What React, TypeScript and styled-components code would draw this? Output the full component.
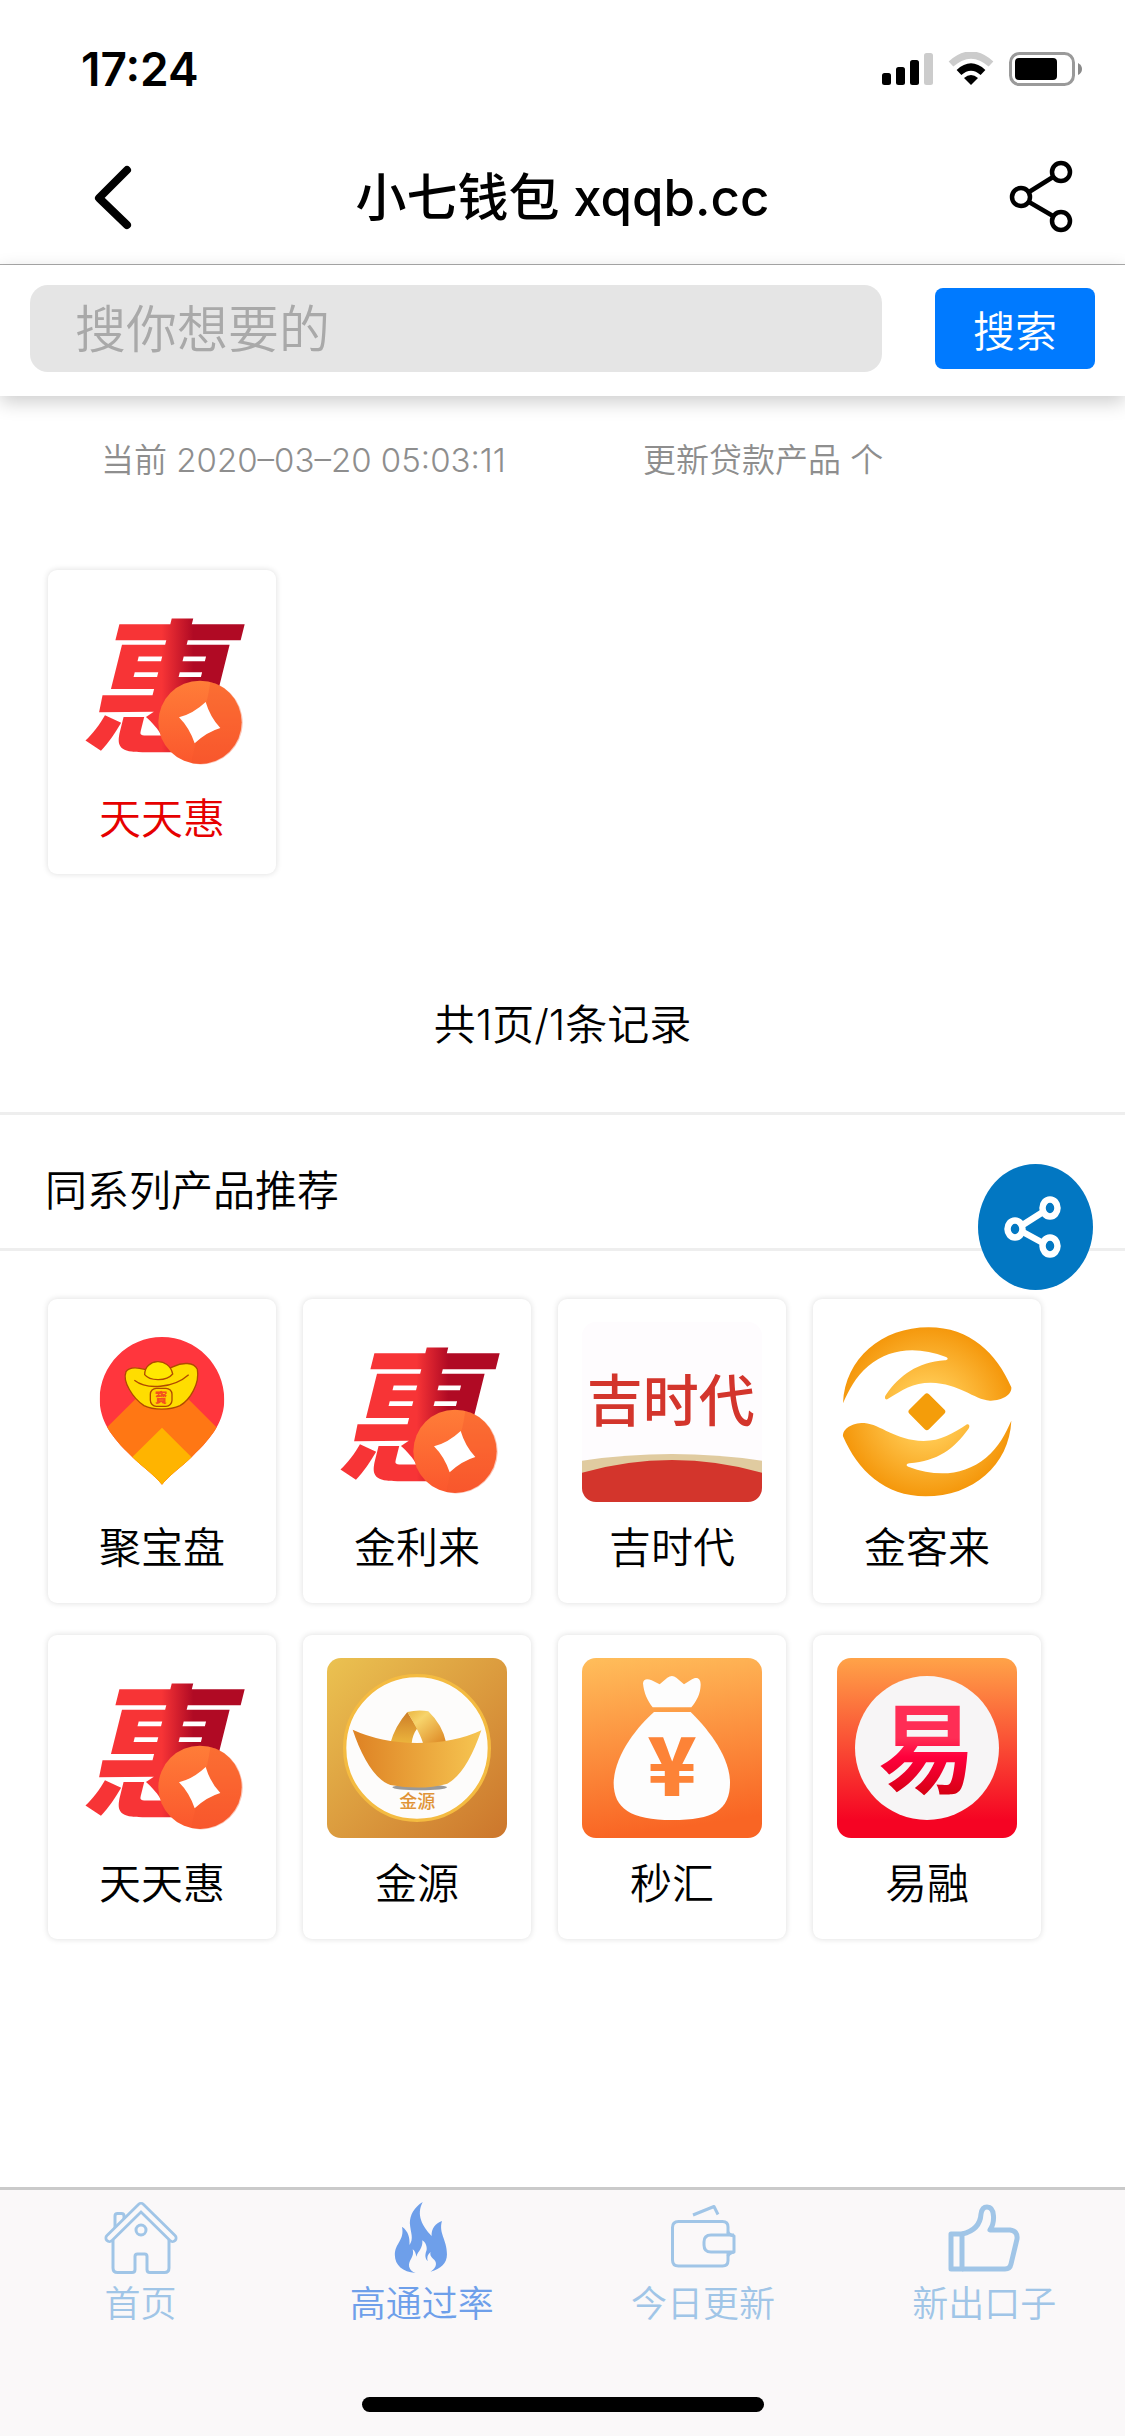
import React from "react";
import styled, { createGlobalStyle } from "styled-components";

const GlobalStyle = createGlobalStyle`
  * { box-sizing: border-box; }
  body {
    margin: 0;
    background: #ffffff;
    color: #000000;
    font-family: Inter, "Noto Sans CJK SC", sans-serif;
    font-size: 42px;
    font-weight: 350;
    line-height: 60px;
  }
  button, input { font-family: inherit; font-weight: inherit; }
  button { cursor: pointer; }
  a { color: inherit; text-decoration: none; }
`;

const Page = styled.div`
  display: flex;
  flex-direction: column;
  min-height: 100vh;
`;

const StatusBar = styled.div`
  display: flex;
  align-items: center;
  justify-content: space-between;
  height: 132px;
  padding: 6px 42px 0 81px;
`;

const Clock = styled.time`
  font-size: 46px;
  font-weight: 600;
`;

const StatusIcons = styled.div`
  display: flex;
  align-items: center;
  gap: 15px;
`;

const NavBar = styled.header`
  display: grid;
  grid-template-columns: 1fr auto 1fr;
  align-items: center;
  height: 133px;
  padding: 0 48px 0 88px;
  border-bottom: 1px solid #ababab;
`;

const PageTitle = styled.h1`
  margin: 0;
  padding-right: 40px;
  font-size: 51px;
  font-weight: 500;
`;

const IconButton = styled.button<{ $end?: boolean }>`
  display: flex;
  justify-self: ${(p) => (p.$end ? "end" : "start")};
  padding: 0;
  border: 0;
  background: none;
`;

const SearchForm = styled.form`
  display: flex;
  align-items: center;
  gap: 53px;
  padding: 20px 30px 24px;
  background: #ffffff;
  box-shadow: 0 6px 18px rgba(0, 0, 0, 0.2);
`;

const SearchInput = styled.input`
  flex: 1;
  min-width: 0;
  height: 87px;
  padding: 2px 45px 0;
  border: 0;
  border-radius: 18px;
  background: #e5e5e5;
  font-size: 51px;
  &::placeholder { color: #a9a9a9; opacity: 1; }
`;

const SearchButton = styled.button`
  width: 160px;
  height: 81px;
  padding: 0;
  border: 0;
  border-radius: 8px;
  background: #007aff;
  color: #ffffff;
  font-size: 42px;
`;

const InfoRow = styled.div`
  display: grid;
  grid-template-columns: 542px 1fr;
  padding: 40px 0 86px 101px;
  color: #8e8e8e;
  font-size: 33px;
  line-height: 48px;
`;

const CardGrid = styled.div`
  display: flex;
  flex-wrap: wrap;
  gap: 32px 27px;
  padding: 0 48px;
`;

const Card = styled.a`
  display: flex;
  flex-direction: column;
  align-items: center;
  gap: 16px;
  width: 228px;
  padding: 23px 24px 25px;
  border-radius: 9px;
  background: #ffffff;
  box-shadow: 0 0 6px rgba(0, 0, 0, 0.14);
`;

const CardLabel = styled.span<{ $hot?: boolean }>`
  color: ${(p) => (p.$hot ? "#e60000" : "#000000")};
`;

const LogoSvg = styled.svg<{ $open?: boolean }>`
  display: block;
  width: 180px;
  height: 180px;
  border-radius: ${(p) => (p.$open ? "0" : "14px")};
  overflow: ${(p) => (p.$open ? "visible" : "hidden")};
`;

const Pager = styled.p`
  margin: 0;
  padding: 121px 0 57px;
  text-align: center;
`;

const SectionTitle = styled.h2`
  margin: 0 0 48px;
  padding: 46px 45px 27px;
  border-top: 3px solid #eeeeee;
  border-bottom: 3px solid #eeeeee;
  font-size: 42px;
  font-weight: inherit;
`;

const FloatingShare = styled.button`
  position: fixed;
  top: 1164px;
  right: 32px;
  display: flex;
  align-items: center;
  justify-content: center;
  width: 115px;
  height: 126px;
  padding: 0;
  border: 0;
  border-radius: 50%;
  background: #0277c2;
`;

const TabBar = styled.nav`
  position: sticky;
  bottom: 0;
  display: flex;
  flex-direction: column;
  gap: 69px;
  margin-top: auto;
  padding: 9px 0 24px;
  border-top: 3px solid #cacaca;
  background: #faf8f9;
`;

const Tabs = styled.div`
  display: grid;
  grid-template-columns: repeat(4, 1fr);
`;

const Tab = styled.a<{ $active?: boolean }>`
  display: flex;
  flex-direction: column;
  align-items: center;
  gap: 3px;
  color: ${(p) => (p.$active ? "#6e9fea" : "#a0c5e7")};
  font-size: 36px;
  line-height: 48px;
`;

const HomeIndicator = styled.div`
  align-self: center;
  width: 402px;
  height: 15px;
  border-radius: 8px;
  background: #000000;
`;

const logoFont = '"Noto Sans CJK SC", sans-serif';

function SignalIcon() {
  return (
    <svg width="51" height="34" viewBox="0 0 51 34" aria-hidden="true">
      <rect x="0" y="21" width="9" height="12" rx="2.5" />
      <rect x="14" y="15" width="9" height="18" rx="2.5" />
      <rect x="28" y="8" width="9" height="25" rx="2.5" />
      <rect x="42" y="1" width="9" height="32" rx="2.5" fill="#cccccc" />
    </svg>
  );
}

function WifiIcon() {
  return (
    <svg width="46" height="34" viewBox="0 0 46 34" fill="none" aria-hidden="true">
      <path d="M3 12Q23 -6 43 12" stroke="#cccccc" strokeWidth="7" />
      <path d="M11 20.500Q23 9.500 35 20.500" stroke="#000" strokeWidth="7" />
      <path d="M16 26Q23 20 30 26L23 33Z" fill="#000" />
    </svg>
  );
}

function BatteryIcon() {
  return (
    <svg width="74" height="34" viewBox="0 0 74 34" aria-hidden="true">
      <rect x="1.500" y="1.500" width="63" height="31" rx="9" fill="none" stroke="#9a9a9a" strokeWidth="3" />
      <rect x="6" y="6" width="42" height="22" rx="4" />
      <path d="M69 11q4 2 4 6t-4 6z" fill="#8a8a8a" />
    </svg>
  );
}

function BackIcon() {
  return (
    <svg width="50" height="66" viewBox="0 0 50 66" fill="none" aria-hidden="true">
      <path d="M39 5L11 33L39 60" stroke="#000" strokeWidth="8" strokeLinecap="round" strokeLinejoin="round" />
    </svg>
  );
}

function ShareIcon() {
  return (
    <svg width="68" height="76" viewBox="0 0 68 76" fill="none" stroke="#000" strokeWidth="4.500" aria-hidden="true">
      <circle cx="12" cy="37" r="9" />
      <circle cx="52" cy="12" r="9" />
      <circle cx="52" cy="61" r="9" />
      <path d="M20 32L44 17M20 42L44 56" />
    </svg>
  );
}

function FloatShareIcon() {
  return (
    <svg width="64" height="68" viewBox="0 0 64 68" fill="none" stroke="#fff" strokeWidth="6.500" aria-hidden="true">
      <ellipse cx="11" cy="36" rx="7.500" ry="8.500" />
      <ellipse cx="46" cy="15" rx="7.500" ry="8.500" />
      <ellipse cx="46" cy="53" rx="7.500" ry="8.500" />
      <path d="M17 33L39 19M17 38L39 50" />
    </svg>
  );
}

function HuiLogo({ id }: { id: string }) {
  return (
    <LogoSvg viewBox="126 126 540 540" aria-hidden="true" $open>
      <defs>
        <linearGradient id={`${id}-ink`} gradientUnits="userSpaceOnUse" x1="395" x2="490" y1="0" y2="0">
          <stop offset="0" stopColor="#f73436" />
          <stop offset="1" stopColor="#b00a24" />
        </linearGradient>
        <linearGradient id={`${id}-coin`} x1="0" x2="0" y1="0" y2="1">
          <stop offset="0" stopColor="#ff7d38" />
          <stop offset="1" stopColor="#fb572d" />
        </linearGradient>
      </defs>
      <text x="370" y="570" textAnchor="middle" fontFamily={logoFont} fontSize="430" fontWeight="900" fontStyle="italic" fill={`url(#${id}-ink)`}>
        惠
      </text>
      <circle cx="510" cy="514" r="125" fill={`url(#${id}-coin)`} />
      <path d="M541 393A125 125 0 0 1 485 637C495 560 530 480 541 393Z" fill="#f4552c" opacity=".35" />
      <path d="M527 453Q541 500 571 531Q530 543 494 577Q478 530 447 499Q490 488 527 453Z" fill="#fff" />
    </LogoSvg>
  );
}

function PinLogo() {
  return (
    <LogoSvg viewBox="96 126 540 540" aria-hidden="true">
      <clipPath id="pin-shape">
        <path d="M366 171C469 171 553 256 553 358C553 420 520 470 456 530C425 560 385 588 366 614C347 588 307 560 276 530C212 470 179 420 179 358C179 256 263 171 366 171Z" />
      </clipPath>
      <g clipPath="url(#pin-shape)">
        <rect x="170" y="160" width="400" height="470" fill="#ff363d" />
        <path d="M366 278L600 512V640H130V512Z" fill="#ff7714" />
        <path d="M366 443L540 617V640H190V617Z" fill="#ffb400" />
      </g>
      <g stroke="#b04a00" strokeWidth="4">
        <path d="M258 275C268 260 292 262 314 268C340 275 378 272 400 260C425 247 462 245 472 268C480 310 450 360 420 377C390 391 340 391 312 377C280 356 246 305 258 275Z" fill="#ffdd00" />
        <path d="M314 284C314 235 388 230 398 282C380 304 330 304 314 284Z" fill="#ffe800" />
        <path d="M283 301C320 330 400 325 446 284" fill="none" />
        <rect x="331" y="325" width="65" height="54" rx="18" fill="#ffd500" />
      </g>
      <text x="363" y="367" textAnchor="middle" fontFamily={logoFont} fontSize="38" fontWeight="900" fill="#f4511e">
        寶
      </text>
    </LogoSvg>
  );
}

function JiLogo() {
  return (
    <LogoSvg viewBox="126 126 540 540" aria-hidden="true">
      <rect x="126" y="126" width="540" height="540" fill="#fefcfe" />
      <text x="392" y="422" textAnchor="middle" fontFamily={logoFont} fontSize="168" fontWeight="500" fill="#d3352c">
        吉时代
      </text>
      <path d="M126 542Q396 502 666 542V620H126Z" fill="#e0cba0" />
      <path d="M126 578Q396 502 666 578V666H126Z" fill="#d3352c" />
    </LogoSvg>
  );
}

function HandsLogo() {
  return (
    <LogoSvg viewBox="891 126 540 540" aria-hidden="true">
      <defs>
        <radialGradient id="hands-gold" gradientUnits="userSpaceOnUse" cx="1161" cy="395" r="255">
          <stop offset=".35" stopColor="#ffc64d" />
          <stop offset="1" stopColor="#f5980c" />
        </radialGradient>
      </defs>
      <g fill="url(#hands-gold)">
        <path d="M909 370C915 235 1025 142 1166 142C1290 142 1370 220 1414 322C1416 345 1385 363 1350 362C1300 358 1260 310 1172 308C1120 308 1085 330 1042 358C1034 360 1033 350 1038 344C1080 285 1130 248 1215 241C1224 240 1226 234 1218 231C1130 198 1050 205 985 258C945 292 927 330 909 370Z" />
        <path d="M1414 422C1408 556 1298 649 1157 649C1033 649 953 571 909 469C907 446 938 428 973 429C1023 433 1063 481 1151 483C1203 483 1238 461 1281 433C1289 431 1290 441 1285 447C1243 506 1193 543 1108 550C1099 551 1097 557 1105 560C1193 593 1273 586 1338 533C1378 499 1396 461 1414 422Z" />
      </g>
      <rect x="1119" y="354" width="83" height="83" rx="9" transform="rotate(45 1161 395.500)" fill="#f49d0a" />
    </LogoSvg>
  );
}

function IngotLogo() {
  return (
    <LogoSvg viewBox="861 114 540 540" aria-hidden="true">
      <defs>
        <linearGradient id="ingot-back" x1="0" x2="1" y1="0" y2="1">
          <stop offset="0" stopColor="#ebc251" />
          <stop offset="1" stopColor="#cc762c" />
        </linearGradient>
        <linearGradient id="ingot-bowl">
          <stop offset=".05" stopColor="#df8526" />
          <stop offset="1" stopColor="#f6c551" />
        </linearGradient>
        <linearGradient id="ingot-left" x1="0" x2="0" y1="0" y2="1">
          <stop offset="0" stopColor="#cd7d27" />
          <stop offset="1" stopColor="#ecb53d" />
        </linearGradient>
        <linearGradient id="ingot-right" x1="0" x2="1" y1="0" y2="1">
          <stop offset="0" stopColor="#eab541" />
          <stop offset=".3" stopColor="#f7d46b" />
          <stop offset="1" stopColor="#dc8420" />
        </linearGradient>
      </defs>
      <rect x="861" y="114" width="540" height="540" fill="url(#ingot-back)" />
      <circle cx="1131" cy="384" r="217" fill="#fdfcfb" stroke="#f4bb41" strokeWidth="10" />
      <ellipse cx="1139" cy="502" rx="82" ry="9" fill="#999" />
      <path d="M1102 276L1132 325Q1117 345 1115 370H1051Q1064 320 1102 276Z" fill="url(#ingot-left)" />
      <path d="M1102 276Q1135 268 1165 274Q1208 315 1219 370H1149Q1143 345 1102 276Z" fill="url(#ingot-right)" />
      <path d="M938 329Q1020 367 1131 369Q1245 369 1324 331Q1280 460 1222 491Q1145 512 1051 495C1005 480 965 410 938 329Z" fill="url(#ingot-bowl)" />
      <text x="1132" y="565" textAnchor="middle" fontFamily={logoFont} fontSize="54" fontWeight="500" fill="#e09438">
        金源
      </text>
    </LogoSvg>
  );
}

function BagLogo() {
  return (
    <LogoSvg viewBox="126 114 540 540" aria-hidden="true">
      <defs>
        <linearGradient id="bag-back" x1="0" x2=".15" y1="0" y2="1">
          <stop offset="0" stopColor="#ffbe5b" />
          <stop offset="1" stopColor="#f96524" />
        </linearGradient>
      </defs>
      <rect x="126" y="114" width="540" height="540" fill="url(#bag-back)" />
      <path d="M309 190C310 176 322 175 335 181L359 193L382 173Q396 163 409 173L432 193L456 178C472 169 482 176 482 194C481 223 470 242 454 262H338C322 242 312 220 309 190Z" fill="#fdfdfd" />
      <path d="M342 276H452C495 318 570 405 570 488C570 570 520 600 396 600C272 600 221 565 221 488C223 405 294 318 342 276Z" fill="#fdfdfd" />
      <text x="396" y="529" textAnchor="middle" fontFamily={logoFont} fontSize="244" fontWeight="900" fill="#fd8337">
        ¥
      </text>
    </LogoSvg>
  );
}

function YiLogo() {
  return (
    <LogoSvg viewBox="891 114 540 540" aria-hidden="true">
      <defs>
        <linearGradient id="yi-back" x1="0" x2="0" y1="0" y2="1">
          <stop offset="0" stopColor="#ffa348" />
          <stop offset=".9" stopColor="#f50423" />
        </linearGradient>
        <linearGradient id="yi-ink" gradientUnits="userSpaceOnUse" x1="0" x2="0" y1="240" y2="525">
          <stop offset=".4" stopColor="#ff2d55" />
          <stop offset=".6" stopColor="#ff003c" />
          <stop offset="1" stopColor="#d50012" />
        </linearGradient>
      </defs>
      <rect x="891" y="114" width="540" height="540" fill="url(#yi-back)" />
      <circle cx="1161" cy="384" r="216" fill="#f7f5f6" />
      <text x="1161" y="494" textAnchor="middle" fontFamily={logoFont} fontSize="292" fontWeight="700" fill="url(#yi-ink)">
        易
      </text>
    </LogoSvg>
  );
}

function HouseIcon() {
  return (
    <svg width="80" height="78" viewBox="100 29 80 78" fill="none" stroke="currentColor" strokeWidth="3" strokeLinejoin="round" aria-hidden="true">
      <path d="M114 62V46q0-2.500 2.500-2.500h4q2.500 0 2.500 2.500v6" />
      <path d="M112 70V98q0 4.500 4.500 4.500H131q3 0 3-3V86.500q0-2.500 2.500-2.500h7q2.500 0 2.500 2.500V99.500q0 3 3 3h14.500q4.500 0 4.500-4.500V70" />
      <circle cx="140" cy="60" r="5" />
      <path d="M108.500 68L140 37L171.500 68" strokeWidth="10" strokeLinecap="round" />
      <path d="M108.500 68L140 37L171.500 68" strokeWidth="4.500" strokeLinecap="round" stroke="#faf8f9" />
    </svg>
  );
}

function FlameIcon() {
  return (
    <svg width="80" height="78" viewBox="382 29 80 78" fill="currentColor" aria-hidden="true">
      <g transform="scale(.357 .3333)">
        <path d="M1184 96C1165 135 1183 168 1209 198C1208 175 1220 160 1238 153C1228 190 1252 208 1252 253C1252 280 1235 297 1206 305C1225 292 1225 275 1213 266C1206 260 1204 253 1206 246C1198 253 1195 262 1198 274C1188 262 1192 250 1195 240C1197 228 1190 215 1183 211C1185 235 1172 242 1166 260C1165 250 1162 242 1156 238C1162 262 1143 270 1146 290C1149 300 1155 305 1164 309C1128 306 1106 285 1106 255C1106 218 1134 212 1126 170C1145 184 1148 205 1147 225C1160 205 1150 190 1148 160C1148 135 1160 112 1184 96Z" />
      </g>
    </svg>
  );
}

function WalletIcon() {
  return (
    <svg width="80" height="78" viewBox="103 29 80 78" fill="none" stroke="currentColor" strokeWidth="3" strokeLinejoin="round" aria-hidden="true">
      <path d="M133 45L154 36.500L158 44.500" />
      <path d="M174 65H151q-7 0-7 7v3q0 7 7 7h23" />
      <path d="M168 64V57q0-5.500-5.500-5.500H118.500q-6 0-6 6V90q0 6 6 6H162.500q5.500 0 5.500-5.500V83" />
      <path d="M168 62q1 3 6 4V82q-5 1-6 4" />
    </svg>
  );
}

function ThumbIcon() {
  return (
    <svg width="80" height="78" viewBox="384 29 80 78" fill="none" stroke="currentColor" strokeWidth="5" strokeLinejoin="round" aria-hidden="true">
      <path d="M391 64H402V99H391Z" />
      <path d="M402 64Q420 60 421 44Q422 37 427 37Q433 37 433.500 46Q434 54 430 60H450Q458 61 457 69L451 94Q450 99 445 99H402" />
    </svg>
  );
}

const related = [
  { name: "聚宝盘", logo: <PinLogo /> },
  { name: "金利来", logo: <HuiLogo id="jinlilai" /> },
  { name: "吉时代", logo: <JiLogo /> },
  { name: "金客来", logo: <HandsLogo /> },
  { name: "天天惠", logo: <HuiLogo id="tiantianhui" /> },
  { name: "金源", logo: <IngotLogo /> },
  { name: "秒汇", logo: <BagLogo /> },
  { name: "易融", logo: <YiLogo /> },
];

const tabs = [
  { name: "首页", icon: <HouseIcon /> },
  { name: "高通过率", icon: <FlameIcon />, active: true },
  { name: "今日更新", icon: <WalletIcon /> },
  { name: "新出口子", icon: <ThumbIcon /> },
];

export default function App() {
  return (
    <Page>
      <GlobalStyle />
      <StatusBar>
        <Clock>17:24</Clock>
        <StatusIcons>
          <SignalIcon />
          <WifiIcon />
          <BatteryIcon />
        </StatusIcons>
      </StatusBar>
      <NavBar>
        <IconButton type="button" aria-label="返回">
          <BackIcon />
        </IconButton>
        <PageTitle>小七钱包 xqqb.cc</PageTitle>
        <IconButton type="button" aria-label="分享" $end>
          <ShareIcon />
        </IconButton>
      </NavBar>
      <SearchForm onSubmit={(e) => e.preventDefault()}>
        <SearchInput type="text" aria-label="搜索" placeholder="搜你想要的" />
        <SearchButton type="submit">搜索</SearchButton>
      </SearchForm>
      <main>
        <InfoRow>
          <span>当前 2020–03–20 05:03:11</span>
          <span>更新贷款产品 个</span>
        </InfoRow>
        <CardGrid>
          <Card href="#result">
            <HuiLogo id="result" />
            <CardLabel $hot>天天惠</CardLabel>
          </Card>
        </CardGrid>
        <Pager>共1页/1条记录</Pager>
        <SectionTitle>同系列产品推荐</SectionTitle>
        <CardGrid>
          {related.map((item) => (
            <Card key={item.name} href="#product">
              {item.logo}
              <CardLabel>{item.name}</CardLabel>
            </Card>
          ))}
        </CardGrid>
      </main>
      <FloatingShare type="button" aria-label="分享">
        <FloatShareIcon />
      </FloatingShare>
      <TabBar>
        <Tabs>
          {tabs.map((tab) => (
            <Tab key={tab.name} href="#tab" $active={tab.active}>
              {tab.icon}
              <span>{tab.name}</span>
            </Tab>
          ))}
        </Tabs>
        <HomeIndicator />
      </TabBar>
    </Page>
  );
}
